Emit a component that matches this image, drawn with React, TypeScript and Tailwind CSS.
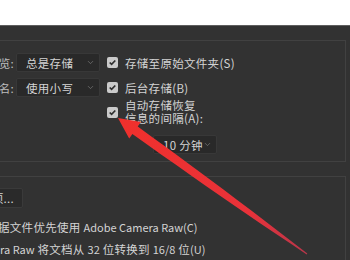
import { ChevronDown } from 'lucide-react'

function Check() {
  return (
    <span className="w-[11px] h-[11px] rounded-[2px] bg-[#cacaca] flex items-center justify-center shrink-0">
      <svg width="9" height="9" viewBox="0 0 9 9">
        <path d="M1.7 4.5 L3.6 6.4 L7.3 2.5" stroke="#2e2e2e" strokeWidth="1.7" fill="none" />
      </svg>
    </span>
  )
}

function Select({ text, className }: { text: string; className: string }) {
  return (
    <div
      className={`flex items-center justify-between h-[19px] pl-[9px] pr-[4px] bg-[#292929] border border-[#383838] rounded-[2px] whitespace-nowrap ${className}`}
    >
      <span>{text}</span>
      <ChevronDown size={9} strokeWidth={1.5} className="text-[#8c8c8c]" />
    </div>
  )
}

// latin runs are a bit narrower than the CJK ones
function L({ children }: { children: React.ReactNode }) {
  return <span className="text-[11px] tracking-normal">{children}</span>
}

// red arrow drawn over the dialog
function Arrow() {
  const tip = [118, 118]
  const tail = [307, 254]
  const dx = tail[0] - tip[0]
  const dy = tail[1] - tip[1]
  const len = Math.hypot(dx, dy)
  const ux = dx / len
  const uy = dy / len
  const px = uy
  const py = -ux
  const headLen = 21
  const base = [tip[0] + ux * headLen, tip[1] + uy * headLen]
  const left: string[] = []
  const right: string[] = []
  const steps = 12
  for (let i = 0; i <= steps; i++) {
    const t = i / steps
    const w = 4 * (1 - t * t) + 0.5
    const cx = base[0] + (tail[0] - base[0]) * t
    const cy = base[1] + (tail[1] - base[1]) * t
    left.push(`${(cx + px * w).toFixed(1)},${(cy + py * w).toFixed(1)}`)
    right.unshift(`${(cx - px * w).toFixed(1)},${(cy - py * w).toFixed(1)}`)
  }
  const wing = 10
  const w1 = `${(base[0] + px * wing).toFixed(1)},${(base[1] + py * wing).toFixed(1)}`
  const w2 = `${(base[0] - px * wing).toFixed(1)},${(base[1] - py * wing).toFixed(1)}`
  const points = [`${tip[0]},${tip[1]}`, w1, ...left, ...right, w2].join(' ')
  return (
    <svg className="absolute left-0 top-0 pointer-events-none" width="350" height="260">
      <defs>
        <linearGradient id="arr" gradientUnits="userSpaceOnUse" x1="118" y1="118" x2="307" y2="254">
          <stop offset="0" stopColor="#f0302c" />
          <stop offset="0.7" stopColor="#e8323a" />
          <stop offset="1" stopColor="#b8364a" />
        </linearGradient>
      </defs>
      <polygon points={points} fill="url(#arr)" />
    </svg>
  )
}

export default function App() {
  return (
    <div className="relative w-[350px] h-[260px] overflow-hidden bg-[#323232] text-[#d4d4d4] text-[11.5px] leading-[14px] tracking-[0.3px] font-['Noto_Sans_CJK_SC',sans-serif]">
      <div className="h-[26px] bg-white border-b border-[#5e5e5e]" />

      <div className="pt-[14px] pr-[4px]">
        <div className="border-t border-r border-b border-[#414141] pt-[12px] pb-[7px]">
          <div className="flex items-center h-[19px]">
            <div className="w-[14px] flex justify-end whitespace-nowrap text-[#bdbdbd]">图像预览:</div>
            <Select text="总是存储" className="ml-[2px] w-[84px]" />
            <div className="ml-[7px]"><Check /></div>
            <span className="ml-[7px] whitespace-nowrap">存储至原始文件夹(S)</span>
          </div>
          <div className="flex items-center h-[19px] mt-[6px]">
            <div className="w-[14px] flex justify-end whitespace-nowrap text-[#bdbdbd]">文件扩展名:</div>
            <Select text="使用小写" className="ml-[2px] w-[84px]" />
            <div className="ml-[7px]"><Check /></div>
            <span className="ml-[7px] whitespace-nowrap">后台存储(B)</span>
          </div>
          <div className="flex items-center mt-[2px]">
            <div className="ml-[107px]"><Check /></div>
            <div className="ml-[7px] leading-[13px] whitespace-nowrap">
              <div>自动存储恢复</div>
              <div>信息的间隔(A):</div>
            </div>
          </div>
          <div className="flex mt-[10px]">
            <Select text="10 分钟" className="ml-[153px] w-[64px] h-[18px]" />
          </div>
        </div>

        <div className="mt-[14px] border-t border-r border-[#414141] pt-[11px] h-[90px]">
          <div className="w-[23px] flex justify-end">
            <div className="h-[20px] flex items-center px-[8px] bg-[#2a2a2a] border border-[#3a3a3a] rounded-[2px] whitespace-nowrap">
              Camera Raw 首选项...
            </div>
          </div>
          <div className="mt-[12px] -ml-[2px] whitespace-nowrap">
            据文件优先使用 <L>Adobe Camera Raw(C)</L>
          </div>
          <div className="mt-[8px] whitespace-nowrap">
            <L>ra Raw</L> 将文档从 <L>32</L> 位转换到 <L>16/8</L> 位<L>(U)</L>
          </div>
        </div>
      </div>

      <Arrow />
    </div>
  )
}
